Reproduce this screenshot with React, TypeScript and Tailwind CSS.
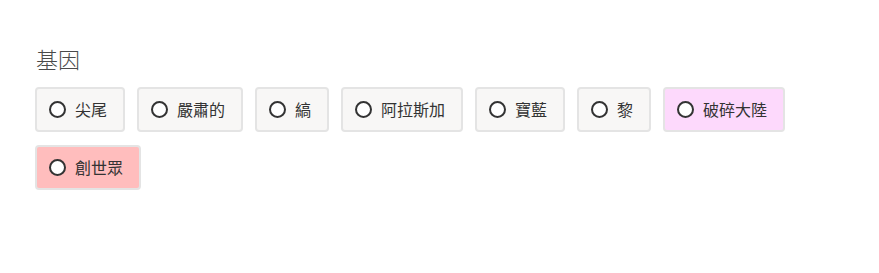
const genes = [
  { label: '尖尾', tone: 'default' },
  { label: '嚴肅的', tone: 'default' },
  { label: '縞', tone: 'default' },
  { label: '阿拉斯加', tone: 'default' },
  { label: '寶藍', tone: 'default' },
  { label: '黎', tone: 'default' },
  { label: '破碎大陸', tone: 'pink' },
  { label: '創世眾', tone: 'red' },
] as const;

const toneClass = {
  default: 'bg-[#f8f7f6]',
  pink: 'bg-[#fdd9fc]',
  red: 'bg-[#ffbdbd]',
};

const GeneOption = ({ label, tone }: { label: string; tone: keyof typeof toneClass }) => (
  <label
    className={`flex items-center rounded-[4px] border-2 border-[#e4e4e4] py-[10px] pl-3 pr-4 text-[16px] leading-[21px] text-[#333] ${toneClass[tone]}`}
  >
    <span className="mr-[9px] h-[17px] w-[17px] shrink-0 rounded-full border-2 border-[#333] bg-white" />
    <span>{label}</span>
  </label>
);

export default function App() {
  return (
    <div
      className="h-[273px] w-[879px] bg-white px-[35px] pt-[42px]"
      style={{ fontFamily: '"Noto Sans CJK TC", "Noto Sans", sans-serif' }}
    >
      <h2 className="mb-[13px] pl-px text-[22px] font-light leading-[32px] text-[#4a4a4a]">基因</h2>
      <div className="flex flex-wrap gap-x-3 gap-y-[13px]">
        {genes.map((gene) => (
          <GeneOption key={gene.label} label={gene.label} tone={gene.tone} />
        ))}
      </div>
    </div>
  );
}
